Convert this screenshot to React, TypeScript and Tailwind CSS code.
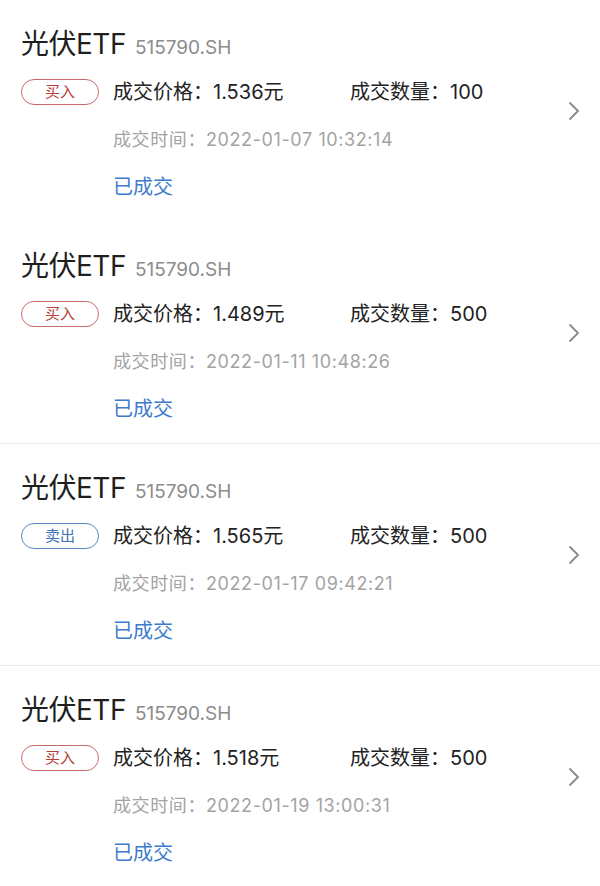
const trades = [
  { side: 'buy', price: '1.536', qty: '100', time: '2022-01-07 10:32:14', line: false },
  { side: 'buy', price: '1.489', qty: '500', time: '2022-01-11 10:48:26', line: true },
  { side: 'sell', price: '1.565', qty: '500', time: '2022-01-17 09:42:21', line: true },
  { side: 'buy', price: '1.518', qty: '500', time: '2022-01-19 13:00:31', line: false },
];

function Chevron() {
  return (
    <svg width="12" height="20" viewBox="0 0 12 20" fill="none">
      <path d="M2 2l8 8-8 8" stroke="#8a8a8a" strokeWidth="1.8" strokeLinecap="round" strokeLinejoin="round" />
    </svg>
  );
}

export default function App() {
  return (
    <div
      className="w-[600px] h-[886px] bg-white overflow-hidden"
      style={{ fontFamily: 'Inter, "Noto Sans CJK SC", sans-serif' }}
    >
      {trades.map((t, i) => (
        <div
          key={i}
          className={
            'flex h-[222px] pl-[21px] pr-[20px] ' +
            (t.line ? 'border-b border-[#ececec]' : '')
          }
        >
          <div className="flex-1 flex flex-col pt-[26px]">
            <div className="flex items-baseline h-[36px] leading-[36px]">
              <span className="text-[28px] text-[#1f1f1f] tracking-[-0.5px]">光伏ETF</span>
              <span className="ml-[9px] text-[19px] text-[#8c8c8c]">515790.SH</span>
            </div>
            <div className="flex items-center mt-[16px] h-[28px]">
              {t.side === 'buy' ? (
                <span className="w-[78px] h-[26px] rounded-full border border-[#c96a6a] text-[#b8403a] text-[15px] leading-[24px] flex items-center justify-center">
                  买入
                </span>
              ) : (
                <span className="w-[78px] h-[26px] rounded-full border border-[#5a86c4] text-[#3f71b8] text-[15px] leading-[24px] flex items-center justify-center">
                  卖出
                </span>
              )}
              <span className="ml-[14px] w-[237px] text-[20px] text-[#222]">成交价格：{t.price}元</span>
              <span className="text-[20px] text-[#222]">成交数量：{t.qty}</span>
            </div>
            <div className="mt-[20px] ml-[92px] h-[28px] leading-[28px] text-[18px] text-[#a3a3a3] tracking-[0.6px]">
              成交时间：{t.time}
            </div>
            <div className="mt-[19px] ml-[92px] h-[28px] leading-[28px] text-[20px] text-[#3d7bcc]">
              已成交
            </div>
          </div>
          <div className="self-center">
            <Chevron />
          </div>
        </div>
      ))}
    </div>
  );
}
